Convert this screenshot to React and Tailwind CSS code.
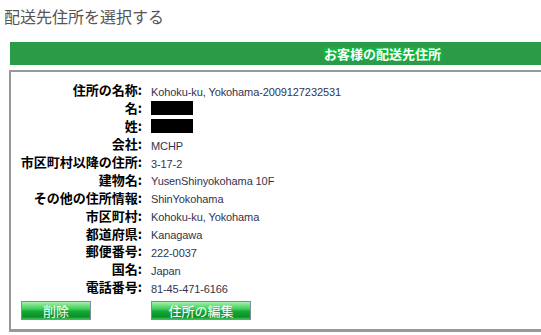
import React from 'react';

const rows = [
  { label: '住所の名称', value: 'Kohoku-ku, Yokohama-2009127232531' },
  { label: '名', redacted: true },
  { label: '姓', redacted: true },
  { label: '会社', value: 'MCHP' },
  { label: '市区町村以降の住所', value: '3-17-2' },
  { label: '建物名', value: 'YusenShinyokohama 10F' },
  { label: 'その他の住所情報', value: 'ShinYokohama' },
  { label: '市区町村', value: 'Kohoku-ku, Yokohama' },
  { label: '都道府県', value: 'Kanagawa' },
  { label: '郵便番号', value: '222-0037' },
  { label: '国名', value: 'Japan' },
  { label: '電話番号', value: '81-45-471-6166' },
];

const jp = "font-['Noto_Sans_CJK_JP',sans-serif]";

function GreenButton({ children, width }) {
  return (
    <button
      className={`${jp} ${width} h-[19px] border border-[#7d8ea3] text-white text-[13px] leading-none flex items-center justify-center bg-[linear-gradient(to_bottom,#a6efae,#3fd057_40%,#16a836_55%,#0c8f2a_88%,#3cbf52)]`}
    >
      {children}
    </button>
  );
}

export default function App() {
  return (
    <div className="w-[541px] h-[335px] overflow-hidden bg-white">
      <h1 className={`${jp} text-[16px] leading-[20px] text-[#555] pl-[4px] pt-[6px]`}>
        配送先住所を選択する
      </h1>

      <div className="ml-[10px] mt-[16px] h-[23px] bg-[#2a9b47] flex items-center pl-[313px]">
        <span className={`${jp} bg-[#0fb53d] text-white font-bold text-[13px] leading-[13px] px-[1px]`}>
          お客様の配送先住所
        </span>
      </div>

      <div className="ml-[9px] mt-[5px] h-[262px] border-t-[2px] border-l-[2px] border-b-[3px] border-[#999]">
        <div className="pt-[9px] flex flex-col">
          {rows.map((r) => (
            <div key={r.label} className="flex items-center h-[17.9px]">
              <div className={`${jp} w-[131px] text-right font-bold text-[13px] text-black leading-none`}>
                {r.label}:
              </div>
              <div className="pl-[9px]">
                {r.redacted ? (
                  <div className="w-[42px] h-[14px] bg-black" />
                ) : (
                  <span className="font-['Liberation_Sans',sans-serif] text-[11px] tracking-[-0.1px] text-[#33334f] leading-none">
                    {r.value}
                  </span>
                )}
              </div>
            </div>
          ))}
        </div>
        <div className="flex items-center mt-[5px] pl-[10px] gap-[60px]">
          <GreenButton width="w-[70px]">削除</GreenButton>
          <GreenButton width="w-[100px]">住所の編集</GreenButton>
        </div>
      </div>
    </div>
  );
}
